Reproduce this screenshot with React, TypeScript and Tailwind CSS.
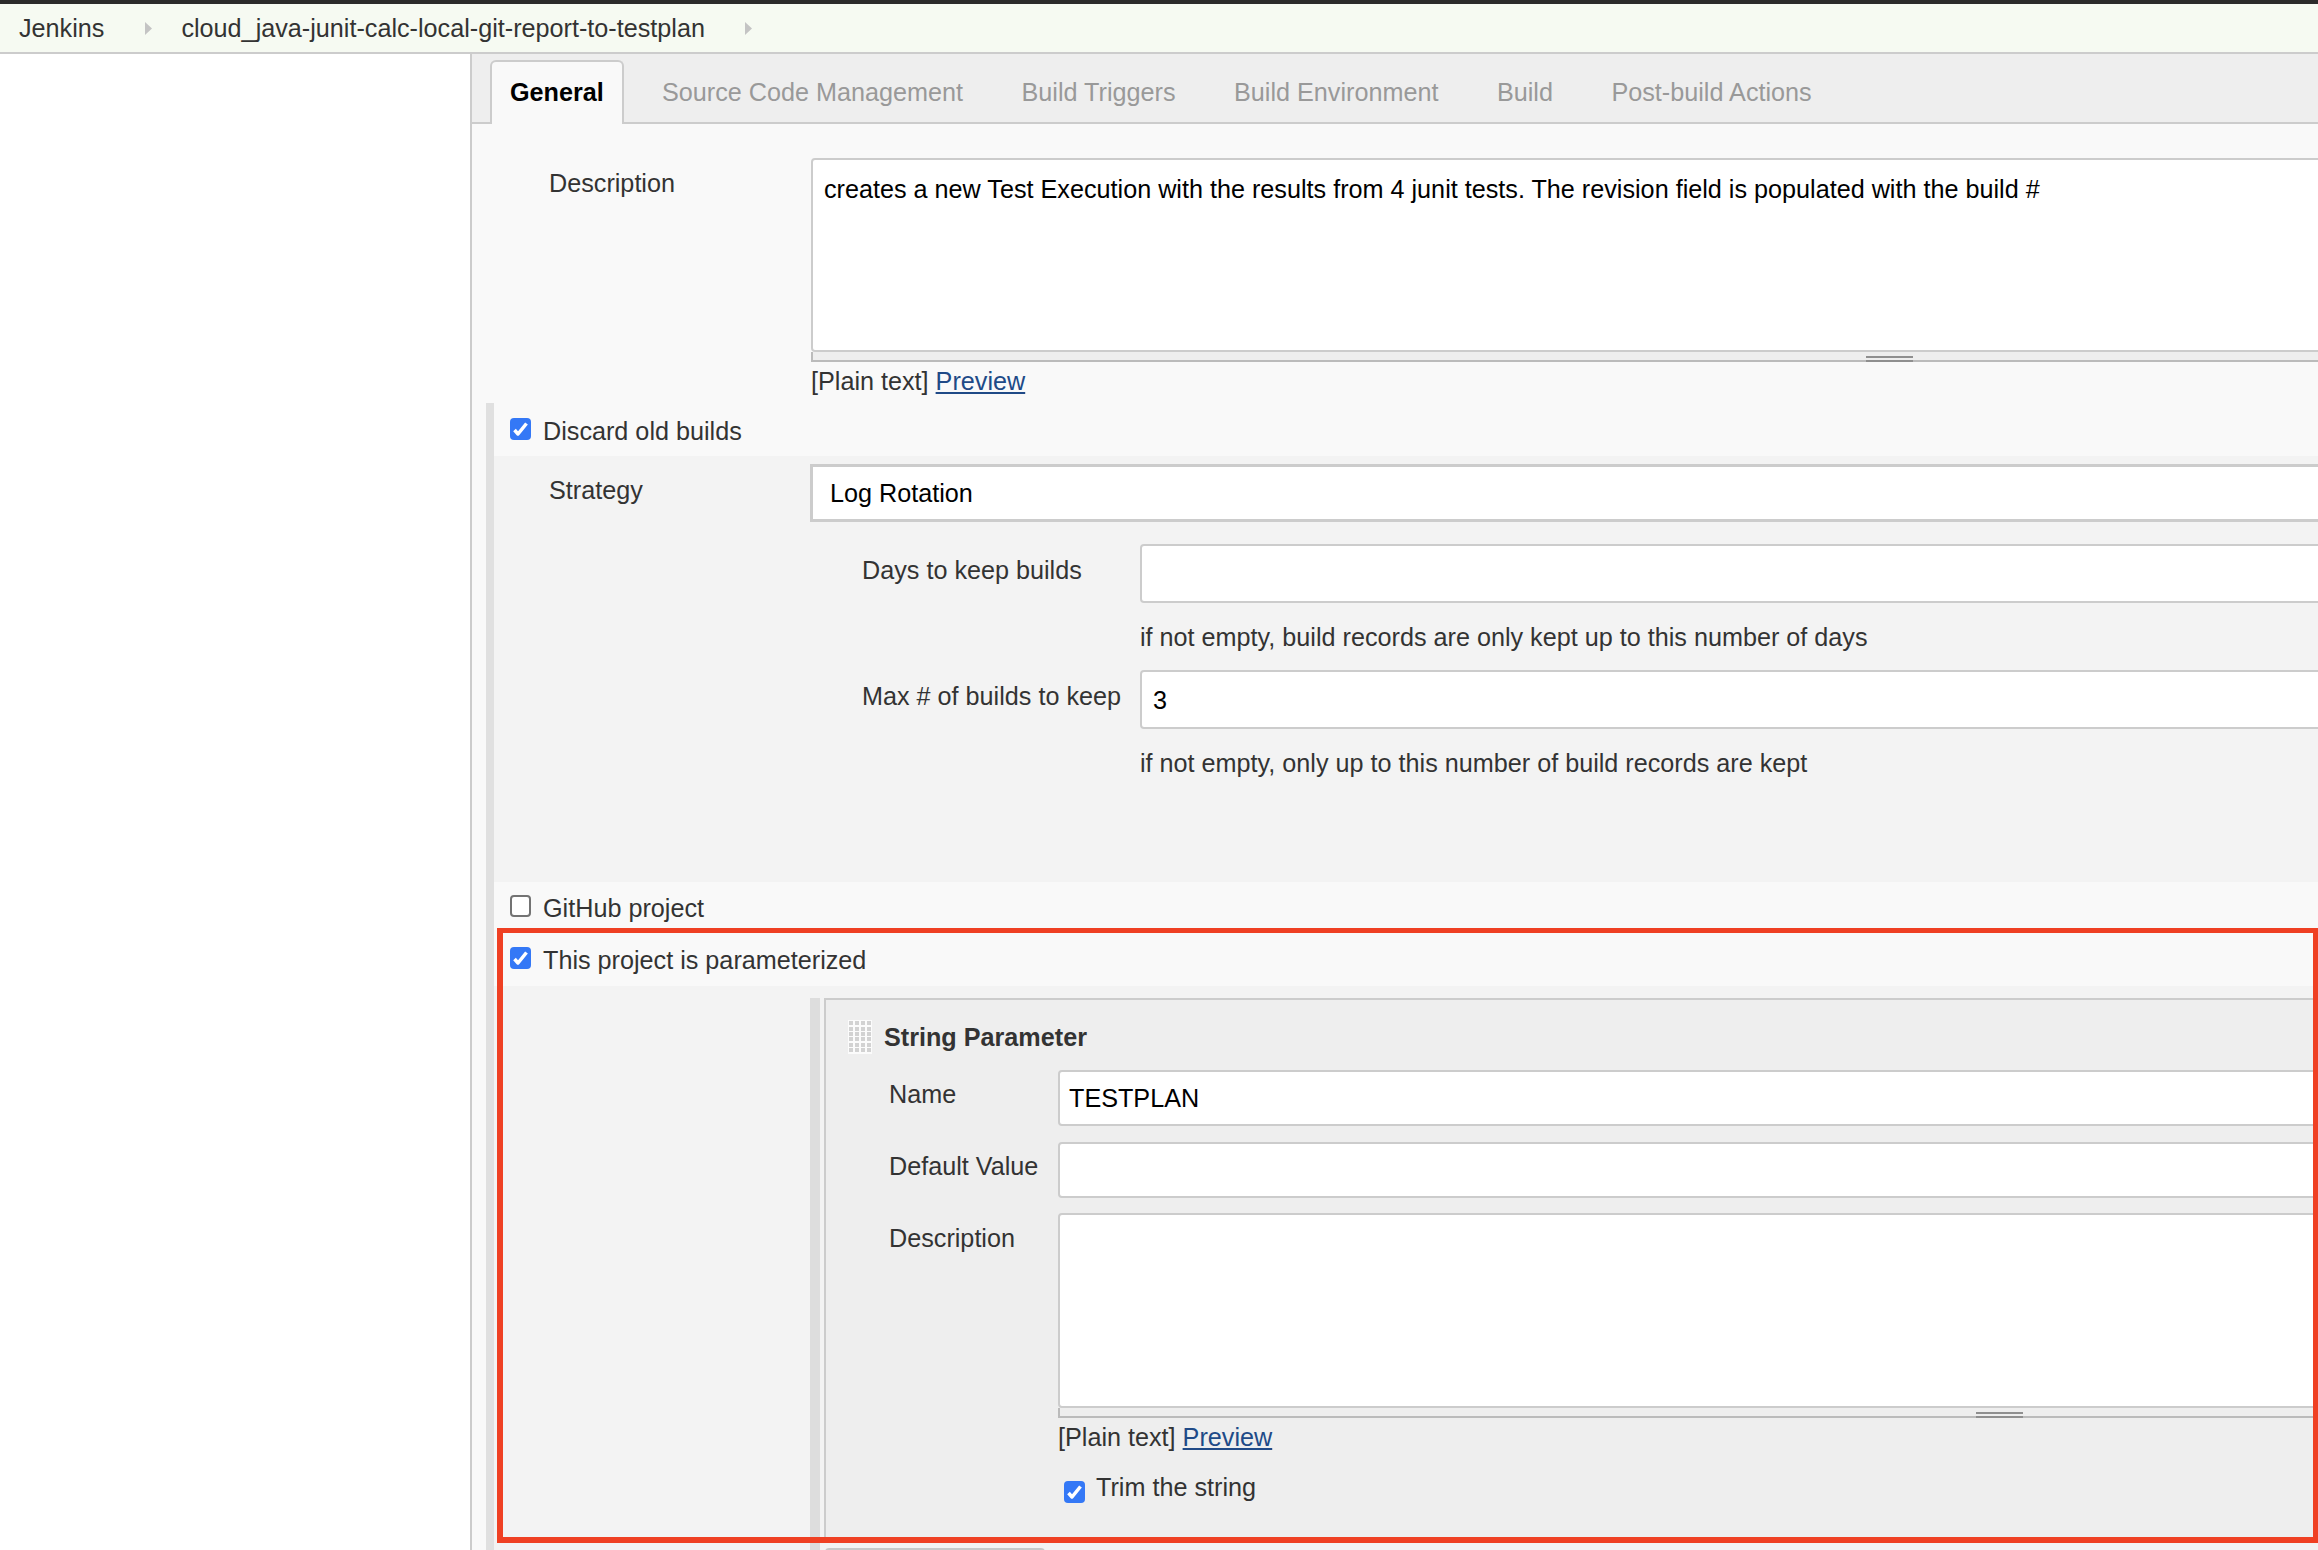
import type { ReactNode } from 'react'

const GRIP_COLS = [851, 857, 863, 869]
const GRIP_ROWS = [1023, 1029, 1034, 1039, 1045, 1050]

function Checkbox({ checked = true }: { checked?: boolean }) {
  if (!checked) {
    return <span className="block h-[22px] w-[21px] shrink-0 rounded-[4px] border-2 border-[#737373] bg-white" />
  }
  return (
    <span className="flex h-[22px] w-[21px] shrink-0 items-center justify-center rounded-[4px] bg-[#3478f6]">
      <svg viewBox="0 0 21 22" className="h-[22px] w-[21px]" fill="none">
        <path d="M4.5 12 8 16 16.5 5.5" stroke="#fff" strokeWidth="3.5" strokeLinejoin="round" />
      </svg>
    </span>
  )
}

function Chevron() {
  return (
    <svg viewBox="0 0 7 13" className="h-[13px] w-[7px] shrink-0">
      <path d="M0 0 7 6.5 0 13Z" fill="#c4c4c4" />
    </svg>
  )
}

function DragGrip() {
  return (
    <svg viewBox="848 1020 24 34" className="h-[34px] w-[24px] shrink-0 bg-[#fbfbfb]">
      {GRIP_ROWS.map((y) =>
        GRIP_COLS.map((x) => <rect key={`${x}-${y}`} x={x - 2} y={y - 2} width="4" height="4" fill="#d2d2d2" />),
      )}
    </svg>
  )
}

function TextBox({ className, children }: { className: string; children?: ReactNode }) {
  return <div className={`rounded-[4px] border-2 border-[#ccc] bg-white text-black ${className}`}>{children}</div>
}

// textarea bottom strip with the drag handle, plus the [Plain text] line
function ResizeFooter({ handleOffset }: { handleOffset: string }) {
  return (
    <>
      <div className="h-[10px] border-b-2 border-l-2 border-[#bbb] bg-[#eee] pt-[4px]">
        <div className={`h-[6px] w-[47px] border-y-2 border-[#8f8f8f] ${handleOffset}`} />
      </div>
      <div className="mt-[4px] h-[30px]">
        [Plain text] <a className="text-[#204a87] underline">Preview</a>
      </div>
    </>
  )
}

export default function App() {
  const tabs = ['Source Code Management', 'Build Triggers', 'Build Environment', 'Build', 'Post-build Actions']

  return (
    <div className="relative h-[1550px] w-[2318px] overflow-hidden bg-white font-['Liberation_Sans',Arial,sans-serif] text-[25.2px] leading-[30px] text-[#333]">
      <div className="h-[4px] bg-[#2b2b2b]" />

      {/* Breadcrumb */}
      <div className="flex h-[50px] items-center border-b-2 border-[#ccc] bg-[#f6faf2] pl-[19px]">
        <span>Jenkins</span>
        <span className="ml-[41px]">
          <Chevron />
        </span>
        <span className="ml-[29px]">cloud_java-junit-calc-local-git-report-to-testplan</span>
        <span className="ml-[40px]">
          <Chevron />
        </span>
      </div>

      <div className="flex w-[2400px]">
        <div className="w-[470px] shrink-0" />

        <div className="h-[1496px] flex-1 border-l-2 border-[#ccc] bg-[#f9f9f9]">
          {/* Tabs */}
          <div className="flex h-[70px] items-start border-b-2 border-[#ccc] bg-[#eee] pl-[18px] pt-[6px]">
            <div className="flex h-[64px] w-[134px] items-start rounded-t-[6px] border-2 border-b-0 border-[#ccc] bg-[#f9f9f9] pl-[18px] pt-[15px] font-bold text-black">
              General
            </div>
            <div className="ml-[38px] flex gap-[58.5px] pt-[17px] text-[#999]">
              {tabs.map((t) => (
                <span key={t}>{t}</span>
              ))}
            </div>
          </div>

          {/* Description */}
          <div className="flex pt-[34px]">
            <div className="w-[339px] shrink-0 pl-[77px] pt-[10px]">Description</div>
            <div className="flex-1">
              <TextBox className="h-[194px] pl-[11px] pt-[14px]">
                creates a new Test Execution with the results from 4 junit tests. The revision field is populated with the build #
              </TextBox>
              <ResizeFooter handleOffset="ml-[1053px]" />
            </div>
          </div>

          {/* Optional blocks */}
          <div className="ml-[14px] mt-[7px] h-[1147px] border-l-[8px] border-[#e0e0e0]">
            <div className="flex h-[53px] gap-[12px] pl-[16px] pt-[15px]">
              <Checkbox />
              <span className="-mt-[2px]">Discard old builds</span>
            </div>

            <div className="h-[426px] bg-[#f3f3f3] pt-[8px]">
              <div className="flex">
                <div className="w-[316px] shrink-0 pl-[55px] pt-[11px]">Strategy</div>
                <div className="flex-1">
                  <div className="flex h-[58px] items-center border-[3px] border-[#ccc] bg-white pl-[17px] text-black">Log Rotation</div>

                  <div className="mt-[22px] flex">
                    <div className="w-[330px] shrink-0 pl-[52px] pt-[11px]">Days to keep builds</div>
                    <div className="flex-1">
                      <TextBox className="h-[59px]" />
                      <div className="mb-[18px] mt-[19px]">if not empty, build records are only kept up to this number of days</div>
                    </div>
                  </div>

                  <div className="flex">
                    <div className="w-[330px] shrink-0 pl-[52px] pt-[11px]">Max # of builds to keep</div>
                    <div className="flex-1">
                      <TextBox className="flex h-[59px] items-center pl-[11px]">3</TextBox>
                      <div className="mt-[19px]">if not empty, only up to this number of build records are kept</div>
                    </div>
                  </div>
                </div>
              </div>
            </div>

            <div className="flex h-[52px] gap-[12px] pl-[16px] pt-[13px]">
              <Checkbox checked={false} />
              <span className="-mt-[2px]">GitHub project</span>
            </div>

            <div className="flex h-[52px] gap-[12px] pl-[16px] pt-[13px]">
              <Checkbox />
              <span className="-mt-[2px]">This project is parameterized</span>
            </div>

            {/* Parameter list */}
            <div className="h-[564px] bg-[#f3f3f3] pl-[316px] pt-[12px]">
              <div className="h-[552px] border-l-[10px] border-[#ddd] pl-[4px]">
                <div className="h-[545px] border-l-2 border-t-2 border-[#ccc] bg-[#eee]">
                  <div className="flex items-center gap-[12px] pl-[22px] pt-[20px]">
                    <DragGrip />
                    <span className="-mt-[1px] font-bold">String Parameter</span>
                  </div>

                  <div className="mt-[16px] flex">
                    <div className="w-[232px] shrink-0 pl-[63px] pt-[9px]">Name</div>
                    <TextBox className="flex h-[56px] flex-1 items-center pl-[9px]">TESTPLAN</TextBox>
                  </div>
                  <div className="mt-[16px] flex">
                    <div className="w-[232px] shrink-0 pl-[63px] pt-[9px]">Default Value</div>
                    <TextBox className="h-[56px] flex-1" />
                  </div>
                  <div className="mt-[15px] flex">
                    <div className="w-[232px] shrink-0 pl-[63px] pt-[10px]">Description</div>
                    <div className="flex-1">
                      <TextBox className="h-[195px]" />
                      <ResizeFooter handleOffset="ml-[916px]" />
                      <div className="mt-[21px] flex gap-[11px] pl-[6px]">
                        <span className="pt-[8px]">
                          <Checkbox />
                        </span>
                        <span className="-mt-[1px]">Trim the string</span>
                      </div>
                    </div>
                  </div>
                </div>
                <div className="ml-[1px] mt-[5px] h-[4px] w-[220px] rounded-t-[4px] border-t-2 border-[#c8c8c8]" />
              </div>
            </div>
          </div>
        </div>
      </div>

      {/* Annotation drawn over the screenshot */}
      <div className="absolute left-[497px] top-[928px] h-[615px] w-[1821px] border-b-[6px] border-l-[6px] border-r-[5px] border-t-[5px] border-[#ef4023]" />
    </div>
  )
}
